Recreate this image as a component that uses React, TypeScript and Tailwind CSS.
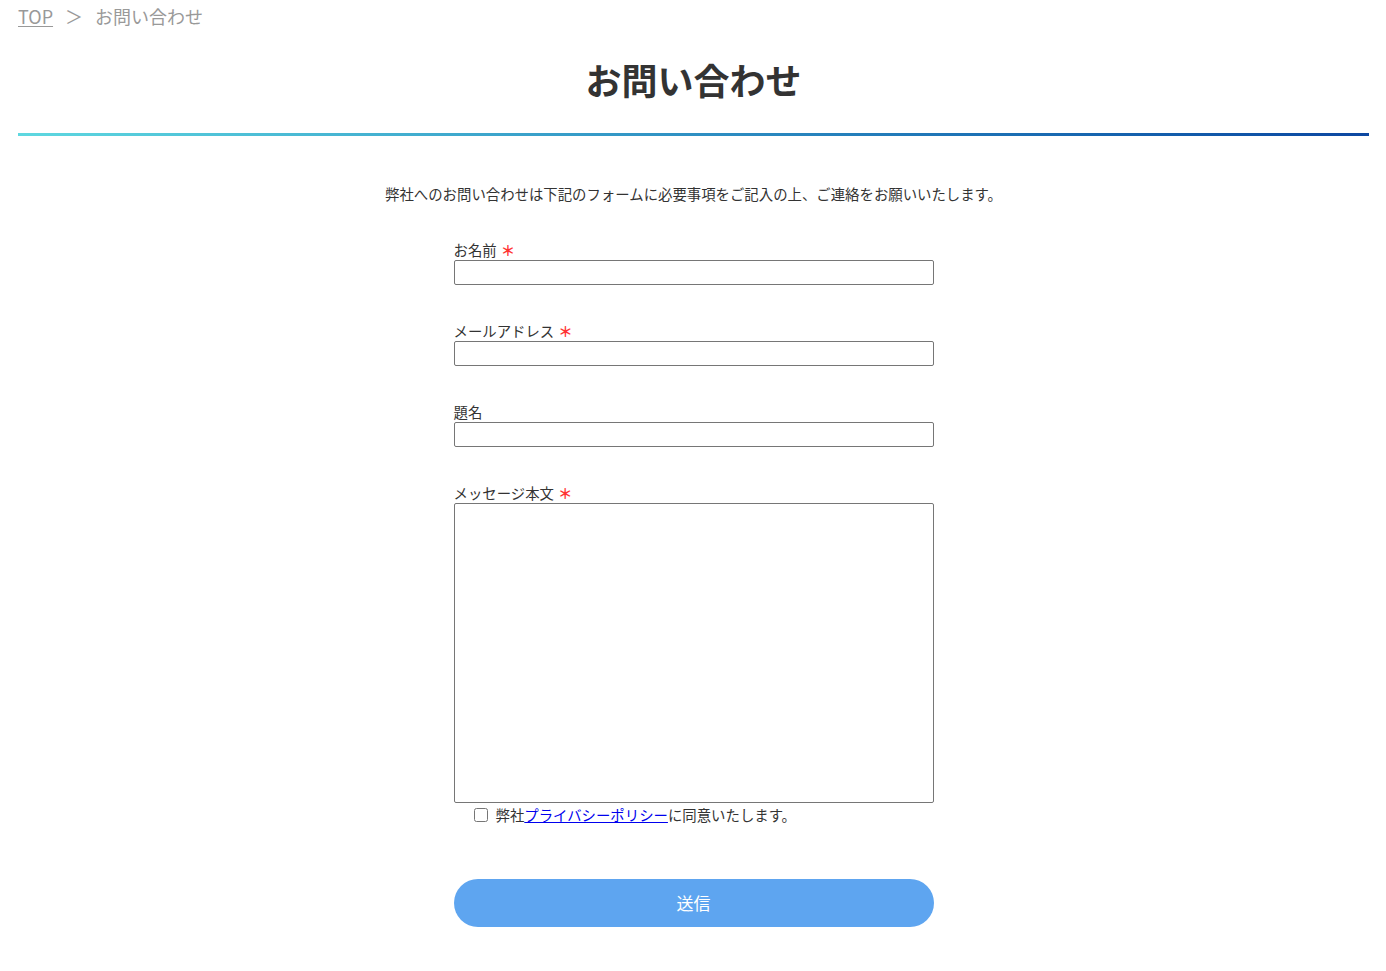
import { useState } from 'react';

const font = { fontFamily: '"Noto Sans CJK JP", "Noto Sans", sans-serif' };

function Field({ label, required, tall }: { label: string; required?: boolean; tall?: boolean }) {
  return (
    <div className="flex flex-col">
      <label className="text-[14.4px] leading-[20px] text-[#333]">
        {label}
        {required && <span className="ml-1 font-bold text-[#ff3333]">＊</span>}
      </label>
      {tall ? (
        <textarea className="h-[300px] w-full resize-none rounded-[2px] border border-[#767676] bg-white px-1 outline-none" />
      ) : (
        <input
          type="text"
          className="h-[25px] w-full rounded-[2px] border border-[#767676] bg-white px-1 outline-none"
        />
      )}
    </div>
  );
}

export default function App() {
  const [agree, setAgree] = useState(false);

  return (
    <div className="min-h-[971px] bg-white pl-[18px] pr-[17px]" style={font}>
      <nav className="flex h-[32px] items-center text-[18px] text-[#999]">
        <a href="#" className="underline underline-offset-2">TOP</a>
        <span className="mx-[12px]">＞</span>
        <span>お問い合わせ</span>
      </nav>

      <h1 className="mt-[17px] text-center text-[36px] font-bold leading-[60px] text-[#333]">
        お問い合わせ
      </h1>
      <div className="mt-[24px] h-[3px] w-full bg-gradient-to-r from-[#5ed8e0] to-[#0d47a1]" />

      <p className="mt-[48px] text-center text-[14.4px] leading-[20px] text-[#333]">
        弊社へのお問い合わせは下記のフォームに必要事項をご記入の上、ご連絡をお願いいたします。
      </p>

      <form className="mx-auto mt-[36px] flex w-[480px] flex-col" onSubmit={(e) => e.preventDefault()}>
        <div className="flex flex-col gap-[36px]">
          <Field label="お名前" required />
          <Field label="メールアドレス" required />
          <Field label="題名" />
          <Field label="メッセージ本文" required tall />
        </div>

        <label className="ml-[20px] mt-[2px] flex items-center gap-[8px] text-[14.4px] leading-[20px] text-[#333]">
          <input
            type="checkbox"
            checked={agree}
            onChange={(e) => setAgree(e.target.checked)}
            className="h-[14px] w-[14px]"
          />
          <span>
            弊社<a href="#" className="text-[#0000ee] underline">プライバシーポリシー</a>に同意いたします。
          </span>
        </label>

        <button
          type="submit"
          className="mt-[54px] h-[48px] w-full rounded-full bg-[#5ea5f0] text-[17px] text-white"
        >
          送信
        </button>
      </form>
    </div>
  );
}
